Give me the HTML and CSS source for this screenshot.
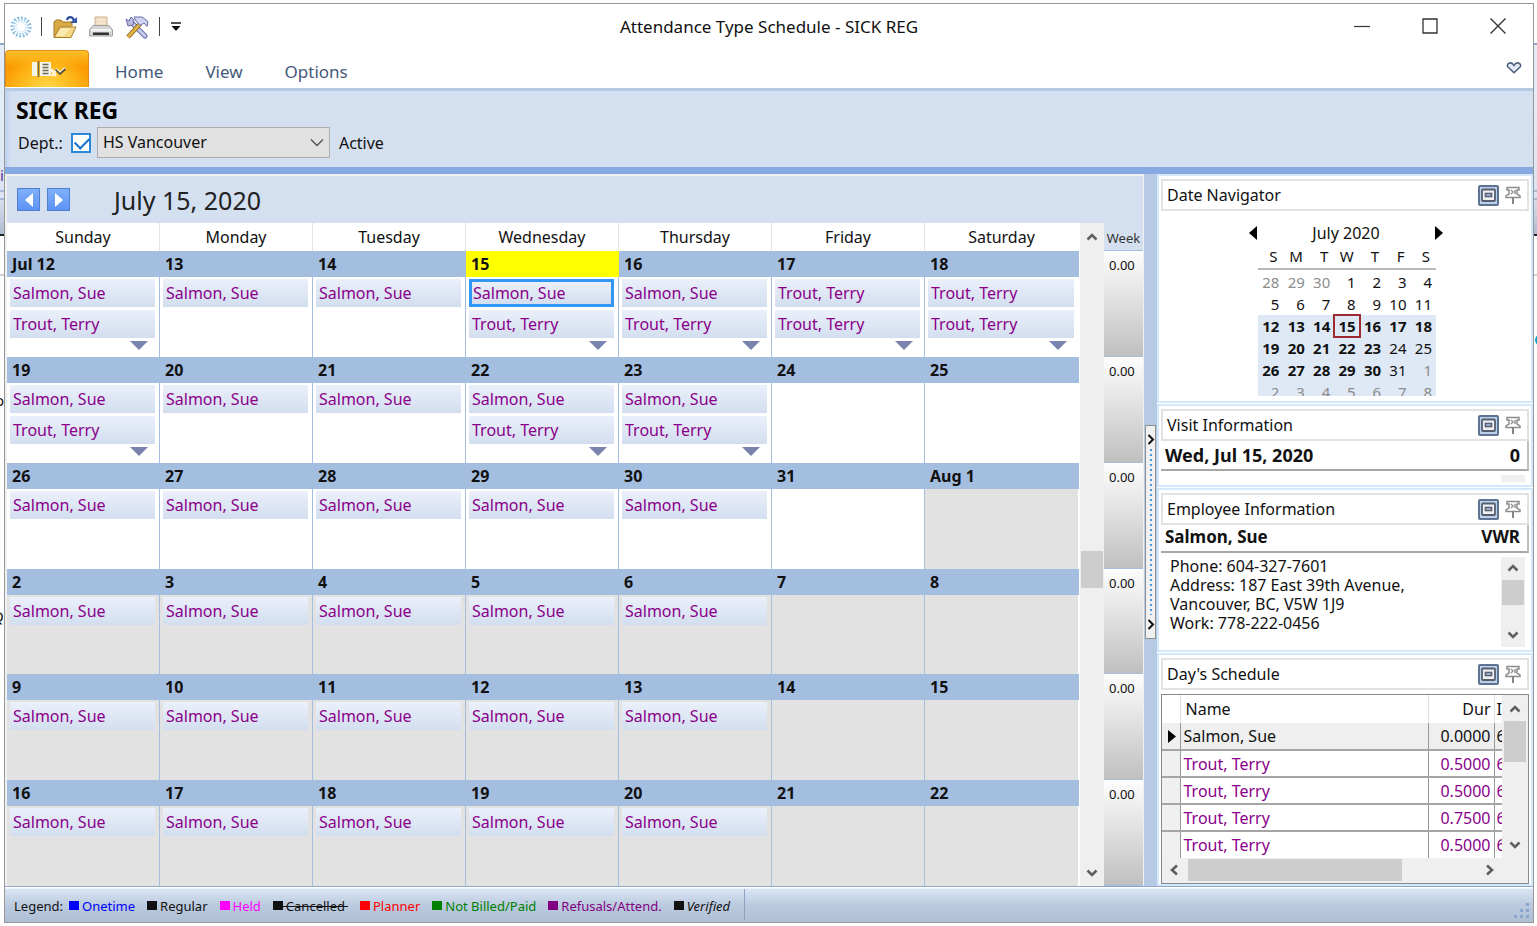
FILE: index.html
```html
<!DOCTYPE html>
<html lang="en">
<head>
<meta charset="utf-8">
<title>Attendance Type Schedule - SICK REG</title>
<link rel="stylesheet" href="styles.css">
</head>
<body>
<svg class="defs" aria-hidden="true">
  <symbol id="max" viewBox="0 0 21 21">
    <rect x="1" y="1" width="19" height="19" rx="1" fill="#bdd0ea" stroke="#5d7391" stroke-width="2"/>
    <rect x="4" y="4.500" width="13" height="11.500" rx="1" fill="#f0f0f2" stroke="#555f70" stroke-width="1.800"/>
    <rect x="7.500" y="8.500" width="6" height="3" fill="#b9cdec" stroke="#555f70" stroke-width="1.600"/>
  </symbol>
  <symbol id="pin" viewBox="0 0 16 18">
    <path d="M2 1.500h12v2.500h-2v4l3 2v1.500H1V10l3-2V4H2z" fill="#fff" stroke="#8c8c8c" stroke-width="1.500"/>
    <path d="M6 4l2 2-2 2M10 4v4" stroke="#8c8c8c" fill="none" stroke-width="1.400"/>
    <path d="M8 11v7" stroke="#858585" stroke-width="2"/>
  </symbol>
  <symbol id="up" viewBox="0 0 12 10"><path d="M1.500 7.500L6 3l4.500 4.500" fill="none" stroke="#606060" stroke-width="2.600"/></symbol>
  <symbol id="down" viewBox="0 0 12 10"><path d="M1.500 2.500L6 7l4.500-4.500" fill="none" stroke="#606060" stroke-width="2.600"/></symbol>
</svg>
<div class="behind" aria-hidden="true">
  <span class="scrap scrap-i">i</span><span class="scrap scrap-o">o</span><span class="scrap scrap-q">Q</span><span class="dot"></span>
</div>
<main class="window">
  <header class="titlebar">
    <div class="quick">
      <svg class="app-icon" width="22" height="22" viewBox="0 0 22 22"><g fill="none" stroke="#6fb0da"><circle cx="11" cy="11" r="9.500" stroke-width="2" stroke-dasharray="1.800 1.900"/><circle cx="11" cy="11" r="7.200" stroke="#93c8e8" stroke-width="2" stroke-dasharray="1.400 1.420"/><circle cx="11" cy="11" r="5" stroke="#c6e2f3" stroke-width="1.500" stroke-dasharray="1 .960"/></g></svg>
      <span class="bar"></span>
      <button class="tool" aria-label="Open"><svg width="26" height="24" viewBox="0 0 26 24"><path d="M2 22V7l2-2h5l2 2h9v4" fill="#dba944" stroke="#a07a28"/><path d="M2 22.500L8 12h16l-5 10.500z" fill="#f6d783" stroke="#a5802e"/><path d="M4 21l5-8h10l-7 8z" fill="#fbe9ae"/><path d="M15 5c1-4 6-4 7 1" fill="none" stroke="#2c4c9c" stroke-width="2.200"/><path d="M18 8h7V2z" fill="#3658a8"/></svg></button>
      <button class="tool" aria-label="Print"><svg width="26" height="22" viewBox="0 0 26 22"><path d="M7 1h12v10H7z" fill="#f4dcc0" stroke="#cdb497"/><path d="M9 4h8M9 7h8" stroke="#fff0dd"/><path d="M5 9.500h16l3.500 4.500v6h-23v-6z" fill="#d6d6d6" stroke="#a0a0a0"/><path d="M3 13h20v2.500H3z" fill="#f4f4f4"/><path d="M5 16.500h16V19H5z" fill="#333"/></svg></button>
      <button class="tool" aria-label="Tools"><svg width="26" height="24" viewBox="0 0 26 24"><path d="M7 7l14 14" stroke="#6a6aa8" stroke-width="5" stroke-linecap="round"/><path d="M7 7l14 14" stroke="#c9cbee" stroke-width="3" stroke-linecap="round"/><path d="M2 4l3 2 2-4 3 3-1 5-5 1z" fill="#b9bbe2" stroke="#6a6aa8"/><path d="M4 22L16 9" stroke="#8e6a1c" stroke-width="4.600"/><path d="M4 22L16 9" stroke="#e2b544" stroke-width="2.600"/><path d="M10 2h8l6 4.500-1 5-3-3.500-4 2.500L12 6z" fill="#d0d2f2" stroke="#6a6aa8"/></svg></button>
      <span class="bar"></span>
      <button class="more" aria-label="Customize toolbar"><svg width="12" height="10" viewBox="0 0 12 10"><path d="M1 1h10" stroke="#222" stroke-width="1.600"/><path d="M1.500 4h9L6 9z" fill="#111"/></svg></button>
    </div>
    <h1 class="title">Attendance Type Schedule - SICK REG</h1>
    <div class="caption">
      <button aria-label="Minimize"><svg width="18" height="18" viewBox="0 0 18 18"><path d="M1 9.500h16" stroke="#333" stroke-width="1.200"/></svg></button>
      <button aria-label="Maximize"><svg width="18" height="18" viewBox="0 0 18 18"><path d="M2 2h14v14H2z" fill="none" stroke="#333" stroke-width="1.300"/></svg></button>
      <button aria-label="Close"><svg width="18" height="18" viewBox="0 0 18 18"><path d="M1.500 1.500l15 15m0-15l-15 15" stroke="#333" stroke-width="1.400"/></svg></button>
    </div>
  </header>
  <nav class="ribbon">
    <button class="file" aria-label="Application menu"><svg width="38" height="18" viewBox="0 0 38 18"><path d="M2 2h5v14H2z" fill="#f4f4ea"/><path d="M8.500 1v16" stroke="#6d6a55" stroke-width="1.500"/><path d="M10 2h11v14H10z" fill="#f4f4ea"/><path d="M12.500 4.500h6m-6 3h6m-6 3h6m-6 3h6" stroke="#6d6a55" stroke-width="1.500"/><path d="M21 9l5 7m0-6l-4 6M26 9l4 4 5-5" fill="none" stroke="#fff5d8" stroke-width="2.400"/><path d="M25.500 9.500L30 14l5.500-5" fill="none" stroke="#57513a" stroke-width="1.700"/></svg></button>
    <a class="tab" href="#home">Home</a><a class="tab" href="#view">View</a><a class="tab" href="#options">Options</a>
    <button class="collapse" aria-label="Collapse ribbon"><svg width="16" height="12" viewBox="0 0 16 12"><path d="M8 3.500C6.500.8 4.500.6 3 1.200 1 2 1 4.200 2.200 5.300L8 10.800l5.800-5.500C15 4.200 15 2 13 1.200c-1.500-.6-3.500-.4-5 2.300z" fill="#e3eaf5" stroke="#4c5e79" stroke-width="1.500"/></svg></button>
  </nav>
  <section class="filter">
    <h2>SICK REG</h2>
    <div class="filter-row">
      <label for="dept-on">Dept.:</label>
      <input class="check" type="checkbox" id="dept-on" checked>
      <div class="combo">
        <select aria-label="Department"><option>HS Vancouver</option></select>
        <svg width="14" height="9" viewBox="0 0 14 9"><path d="M1 1.500l6 6 6-6" fill="none" stroke="#555" stroke-width="1.500"/></svg>
      </div>
      <span>Active</span>
    </div>
  </section>
  <div class="work">
    <section class="calendar">
      <div class="cal-bar">
        <button class="step" aria-label="Previous"><svg width="12" height="16" viewBox="0 0 12 16"><path d="M10 1v14L2 8z" fill="#fff"/></svg></button>
        <button class="step" aria-label="Next"><svg width="12" height="16" viewBox="0 0 12 16"><path d="M2 1v14l8-7z" fill="#fff"/></svg></button>
        <h2>July 15, 2020</h2>
      </div>
      <div class="cal-body">
        <table class="month">
          <thead><tr><th>Sunday</th><th>Monday</th><th>Tuesday</th><th>Wednesday</th><th>Thursday</th><th>Friday</th><th>Saturday</th></tr></thead>
          <tbody>
            <tr>
              <td class="over"><time>Jul 12</time><button>Salmon, Sue</button><button>Trout, Terry</button></td>
              <td><time>13</time><button>Salmon, Sue</button></td>
              <td><time>14</time><button>Salmon, Sue</button></td>
              <td class="over today"><time>15</time><button class="selected">Salmon, Sue</button><button>Trout, Terry</button></td>
              <td class="over"><time>16</time><button>Salmon, Sue</button><button>Trout, Terry</button></td>
              <td class="over"><time>17</time><button>Trout, Terry</button><button>Trout, Terry</button></td>
              <td class="over"><time>18</time><button>Trout, Terry</button><button>Trout, Terry</button></td>
            </tr>
            <tr>
              <td class="over"><time>19</time><button>Salmon, Sue</button><button>Trout, Terry</button></td>
              <td><time>20</time><button>Salmon, Sue</button></td>
              <td><time>21</time><button>Salmon, Sue</button></td>
              <td class="over"><time>22</time><button>Salmon, Sue</button><button>Trout, Terry</button></td>
              <td class="over"><time>23</time><button>Salmon, Sue</button><button>Trout, Terry</button></td>
              <td><time>24</time></td>
              <td><time>25</time></td>
            </tr>
            <tr>
              <td><time>26</time><button>Salmon, Sue</button></td>
              <td><time>27</time><button>Salmon, Sue</button></td>
              <td><time>28</time><button>Salmon, Sue</button></td>
              <td><time>29</time><button>Salmon, Sue</button></td>
              <td><time>30</time><button>Salmon, Sue</button></td>
              <td><time>31</time></td>
              <td class="next"><time>Aug 1</time></td>
            </tr>
            <tr class="next">
              <td><time>2</time><button>Salmon, Sue</button></td>
              <td><time>3</time><button>Salmon, Sue</button></td>
              <td><time>4</time><button>Salmon, Sue</button></td>
              <td><time>5</time><button>Salmon, Sue</button></td>
              <td><time>6</time><button>Salmon, Sue</button></td>
              <td><time>7</time></td>
              <td><time>8</time></td>
            </tr>
            <tr class="next">
              <td><time>9</time><button>Salmon, Sue</button></td>
              <td><time>10</time><button>Salmon, Sue</button></td>
              <td><time>11</time><button>Salmon, Sue</button></td>
              <td><time>12</time><button>Salmon, Sue</button></td>
              <td><time>13</time><button>Salmon, Sue</button></td>
              <td><time>14</time></td>
              <td><time>15</time></td>
            </tr>
            <tr class="next">
              <td><time>16</time><button>Salmon, Sue</button></td>
              <td><time>17</time><button>Salmon, Sue</button></td>
              <td><time>18</time><button>Salmon, Sue</button></td>
              <td><time>19</time><button>Salmon, Sue</button></td>
              <td><time>20</time><button>Salmon, Sue</button></td>
              <td><time>21</time></td>
              <td><time>22</time></td>
            </tr>
          </tbody>
        </table>
        <div class="scroll cal-scroll">
          <svg width="12" height="10"><use href="#up"/></svg><div class="track"><i></i></div><svg width="12" height="10"><use href="#down"/></svg>
        </div>
        <div class="week">
          <h3>Week</h3>
          <ul><li>0.00</li><li>0.00</li><li>0.00</li><li>0.00</li><li>0.00</li><li>0.00</li></ul>
        </div>
      </div>
    </section>
    <div class="splitter">
      <button aria-label="Collapse side panel"><svg width="8" height="11" viewBox="0 0 8 11"><path d="M1.500 1l4.500 4.500L1.500 10" fill="none" stroke="#111" stroke-width="2"/></svg><span></span><svg width="8" height="11" viewBox="0 0 8 11"><path d="M1.500 1l4.500 4.500L1.500 10" fill="none" stroke="#111" stroke-width="2"/></svg></button>
    </div>
    <aside class="side">
      <section class="panel navigator">
        <header><h3>Date Navigator</h3><button aria-label="Maximize panel"><svg width="21" height="21"><use href="#max"/></svg></button><button aria-label="Pin panel"><svg width="16" height="18"><use href="#pin"/></svg></button></header>
        <div class="mini">
          <div class="mini-head">
            <button aria-label="Previous month"><svg width="8" height="14" viewBox="0 0 8 14"><path d="M8 0v14L0 7z"/></svg></button>
            <span>July 2020</span>
            <button aria-label="Next month"><svg width="8" height="14" viewBox="0 0 8 14"><path d="M0 0v14l8-7z"/></svg></button>
          </div>
          <table class="mini-days">
            <thead><tr><th>S</th><th>M</th><th>T</th><th>W</th><th>T</th><th>F</th><th>S</th></tr></thead>
            <tbody>
              <tr><td class="dim">28</td><td class="dim">29</td><td class="dim">30</td><td>1</td><td>2</td><td>3</td><td>4</td></tr>
              <tr><td>5</td><td>6</td><td>7</td><td>8</td><td>9</td><td>10</td><td>11</td></tr>
              <tr class="range"><td class="busy">12</td><td class="busy">13</td><td class="busy">14</td><td class="busy now">15</td><td class="busy">16</td><td class="busy">17</td><td class="busy">18</td></tr>
              <tr class="range"><td class="busy">19</td><td class="busy">20</td><td class="busy">21</td><td class="busy">22</td><td class="busy">23</td><td>24</td><td>25</td></tr>
              <tr class="range"><td class="busy">26</td><td class="busy">27</td><td class="busy">28</td><td class="busy">29</td><td class="busy">30</td><td>31</td><td class="dim">1</td></tr>
              <tr class="range"><td class="dim">2</td><td class="dim">3</td><td class="dim">4</td><td class="dim">5</td><td class="dim">6</td><td class="dim">7</td><td class="dim">8</td></tr>
            </tbody>
          </table>
        </div>
      </section>
      <section class="panel visit">
        <header><h3>Visit Information</h3><button aria-label="Maximize panel"><svg width="21" height="21"><use href="#max"/></svg></button><button aria-label="Pin panel"><svg width="16" height="18"><use href="#pin"/></svg></button></header>
        <div class="headline"><span>Wed, Jul 15, 2020</span><span>0</span></div>
        <div class="stub"></div>
      </section>
      <section class="panel employee">
        <header><h3>Employee Information</h3><button aria-label="Maximize panel"><svg width="21" height="21"><use href="#max"/></svg></button><button aria-label="Pin panel"><svg width="16" height="18"><use href="#pin"/></svg></button></header>
        <div class="headline"><span>Salmon, Sue</span><span>VWR</span></div>
        <div class="contact">
          <p>Phone: 604-327-7601<br>Address: 187 East 39th Avenue,<br>Vancouver, BC, V5W 1J9<br>Work: 778-222-0456</p>
          <div class="scroll"><svg width="12" height="10"><use href="#up"/></svg><div class="track"><i></i></div><svg width="12" height="10"><use href="#down"/></svg></div>
        </div>
      </section>
      <section class="panel day">
        <header><h3>Day's Schedule</h3><button aria-label="Maximize panel"><svg width="21" height="21"><use href="#max"/></svg></button><button aria-label="Pin panel"><svg width="16" height="18"><use href="#pin"/></svg></button></header>
        <div class="grid-box">
          <div class="grid-view">
            <table class="sched">
              <colgroup><col class="c-mark"><col><col class="c-dur"><col class="c-cut"></colgroup>
              <thead><tr><th></th><th>Name</th><th class="num">Dur</th><th>I</th></tr></thead>
              <tbody>
                <tr class="current"><td><svg width="8" height="13" viewBox="0 0 8 13"><path d="M0 0v13l8-6.500z"/></svg></td><td>Salmon, Sue</td><td class="num">0.0000</td><td>6</td></tr>
                <tr><td></td><td>Trout, Terry</td><td class="num">0.5000</td><td>6</td></tr>
                <tr><td></td><td>Trout, Terry</td><td class="num">0.5000</td><td>6</td></tr>
                <tr><td></td><td>Trout, Terry</td><td class="num">0.7500</td><td>6</td></tr>
                <tr><td></td><td>Trout, Terry</td><td class="num">0.5000</td><td>6</td></tr>
              </tbody>
            </table>
            <div class="scroll"><svg width="12" height="10"><use href="#up"/></svg><div class="track"><i></i></div><svg width="12" height="10"><use href="#down"/></svg></div>
          </div>
          <div class="hscroll"><svg width="10" height="12" viewBox="0 0 10 12"><path d="M8 1.500L3 6l5 4.500" fill="none" stroke="#606060" stroke-width="2.600"/></svg><div class="htrack"><i></i></div><svg width="10" height="12" viewBox="0 0 10 12"><path d="M2 1.500L7 6l-5 4.500" fill="none" stroke="#606060" stroke-width="2.600"/></svg></div>
        </div>
      </section>
    </aside>
  </div>
  <footer class="status">
    <div class="legend">
      <span class="legend-title">Legend:</span>
      <span class="key onetime">Onetime</span><span class="key">Regular</span><span class="key held">Held</span><span class="key cancelled">Cancelled</span><span class="key planner">Planner</span><span class="key billed">Not Billed/Paid</span><span class="key refusal">Refusals/Attend.</span><span class="key verified">Verified</span>
    </div>
    <svg class="grip" width="16" height="16" viewBox="0 0 16 16"><path d="M12 0h3v3h-3zM6 6h3v3H6zM12 6h3v3h-3zM0 12h3v3H0zM6 12h3v3H6zM12 12h3v3h-3z" fill="#8ba6cc"/></svg>
  </footer>
</main>
</body>
</html>
```
FILE: styles.css
```css
* { box-sizing: border-box; }
body {
  margin: 0; min-height: 100vh; padding: 3px 3px 3px 4px;
  display: flex; flex-direction: column; position: relative; overflow-x: hidden;
  font: 16px/20px "Noto Sans", "Open Sans", sans-serif; color: #111;
  background: linear-gradient(#fff 0 43px, #8ea6c8 43px 45px, #e3ecf8 45px 110px, #dbe5f3 190px, #a6bad8 190px 192px, #dce6f4 192px 198px, #a6bad8 198px 200px, #d6dfee 200px, #aebcd2 234px, #222 234px 236px, #fff 236px 274px, #d0d0d0 274px 276px, #fff 276px);
}
h1, h2, h3, p, ul { margin: 0; padding: 0; }
h1, h3 { font-size: 16px; font-weight: 400; }
ul { list-style: none; }
button { font: inherit; color: inherit; border: 0; padding: 0; background: none; display: flex; align-items: center; justify-content: center; }
a { color: inherit; text-decoration: none; }
table { border-collapse: collapse; border-spacing: 0; }
th, td { padding: 0; font-weight: 400; }
svg { flex: none; display: block; }
.defs { position: absolute; width: 0; height: 0; }

.behind { position: absolute; inset: 0; overflow: hidden; }
.scrap { position: absolute; font-size: 15px; }
.scrap-i { left: 0; top: 165px; color: #5a2a90; }
.scrap-o { left: -5px; top: 390px; }
.scrap-q { left: -8px; top: 606px; }
.dot { position: absolute; right: -10px; top: 334px; width: 12px; height: 12px; border-radius: 6px; background: #00a8c8; }

.window { position: relative; flex: 1; display: flex; flex-direction: column; border: 1px solid #979797; background: #fff; }

.titlebar { height: 45px; display: grid; grid-template-columns: 1fr auto 1fr; align-items: center; }
.title { font-size: 17px; }
.quick { display: flex; align-items: center; gap: 10px; padding-left: 5px; }
.bar { width: 1px; height: 19px; margin-left: -1px; background: #444; }
.tool { width: 26px; }
.quick .more { width: 12px; }
.caption { display: flex; justify-content: flex-end; gap: 50px; padding: 0 26px 2px 0; }

.ribbon { height: 39px; display: flex; align-items: stretch; color: #44597a; font-size: 17px; }
.file { width: 84px; margin: 1px 0; padding-left: 4px; border-radius: 4px 4px 0 0; border: 1px solid #e08a1c; border-bottom: 0; background: radial-gradient(ellipse at 50% 110%, #ffd84a 0, #fdb81a 45%, rgba(253,160,5,0) 75%), linear-gradient(#fbc02a, #fb9a00 45%, #fba40c); }
.tab { padding: 13px 21px 0; }
.tab:first-of-type { margin-left: 5px; }
.collapse { margin: 0 11px 2px auto; }

.filter { height: 86px; border-top: 3px solid #b7cae3; border-bottom: 7px solid #86a9e1; background: linear-gradient(90deg, #bcd1f0, #d4e0f0 6px); padding: 4px 11px 0; }
.filter h2 { font-size: 23px; line-height: 30px; margin-bottom: 2px; color: #000; }
.filter-row { display: flex; align-items: center; padding-left: 2px; }
.check { appearance: none; position: relative; width: 20px; height: 20px; margin: 0 6px 0 8px; border: 2px solid #2b87d8; background: #fff; }
.check:checked::after { content: ""; position: absolute; left: 2px; top: 2px; width: 12px; height: 7px; border-left: 2px solid #1473c8; border-bottom: 2px solid #1473c8; transform: rotate(-45deg); }
.combo { position: relative; width: 233px; height: 31px; margin-right: 9px; }
.combo select { appearance: none; width: 100%; height: 100%; padding: 0 5px 1px; font: inherit; color: inherit; border: 1px solid #adadad; border-radius: 0; background: #e1e1e1; }
.combo svg { position: absolute; right: 6px; top: 11px; }

.work { flex: 1; display: grid; grid-template-columns: minmax(0, 1fr) 13px 376px; background: #b7cae3; }
.calendar { display: flex; flex-direction: column; border-left: 2px solid #f0f0f0; border-top: 2px solid #f0f0f0; border-right: 1px solid #f0f0f0; background: #d4e0f0; }
.cal-bar { height: 47px; display: flex; align-items: center; gap: 7px; padding-left: 10px; }
.cal-bar h2 { font-size: 25px; font-weight: 400; margin-left: 37px; color: #222; }
.step { width: 23px; height: 23px; border: 1px solid #4f7fd0; background: linear-gradient(#7fb0f8, #5c93f5); }
.cal-body { flex: 1; display: grid; grid-template-columns: minmax(0, 1fr) 24px 39px; }
.month { display: flex; flex-direction: column; border-right: 2px solid #fff; background: #fff; }
.month tr { display: grid; grid-template-columns: repeat(7, minmax(0, 1fr)); }
.month tbody { flex: 1; display: grid; grid-template-rows: repeat(6, minmax(0, 1fr)); }
.month th { height: 28px; padding-top: 4px; border-right: 1px solid #e4e4e4; }
.month th:last-child { border-right: 0; }
.month td { position: relative; min-width: 0; display: flex; flex-direction: column; border-right: 1px solid #a5bddf; }
.month td:last-child { border-right: 0; }
.month time { display: block; height: 26px; flex: none; margin-right: -1px; padding: 3px 5px 0; font-size: 16px; font-weight: 700; background: #a4bee0; }
.month tr.next, .month td.next { background: #e2e2e2; }
.month td button { height: 28px; flex: none; margin: 2px 4px 1px 3px; padding: 0 3px; justify-content: flex-start; color: #8a008a; background: linear-gradient(#ebf0fa, #d2deef); }
.month td button.selected { border: 3px solid #3197f5; padding: 0 1px; }
.month .today time { background: #ff0; }
.over::after { content: ""; position: absolute; right: 11px; bottom: 7px; border: 9px solid transparent; border-top-color: #7a83ad; border-bottom: 0; }

.scroll { display: flex; flex-direction: column; align-items: center; background: #efefef; }
.track { flex: 1; align-self: stretch; display: flex; flex-direction: column; }
.track i { background: #cdcdcd; }
.cal-scroll { padding: 9px 0 8px; }
.cal-scroll .track { padding: 309px 1px 0; }
.cal-scroll i { height: 37px; }
.week { display: flex; flex-direction: column; font-size: 13px; }
.week h3 { height: 28px; padding-top: 5px; font-size: 13px; text-align: center; color: #333; border-bottom: 1px solid #a4bee0; }
.week ul { flex: 1; display: grid; grid-template-rows: repeat(6, minmax(0, 1fr)); }
.week li { padding: 4px 5px; border-bottom: 1px solid #a4bee0; background: linear-gradient(#fdfdfd, #c0c0c0); }

.splitter { display: flex; justify-content: center; align-items: center; padding-top: 4px; }
.splitter button { width: 11px; height: 214px; flex-direction: column; padding: 8px 0; border: 1px solid #8f8f8f; background: #f0f0f0; }
.splitter span { flex: 1; width: 2px; margin: 4px 0; background: repeating-linear-gradient(#3e9be8 0 2px, transparent 2px 5px); }

.side { display: flex; flex-direction: column; gap: 1px; background: #fff; }
.panel { display: flex; flex-direction: column; padding: 3px 2px; border: 2px solid #d3e8fb; }
.panel > header { height: 32px; flex: none; display: flex; align-items: center; gap: 6px; padding: 0 6px 0 4px; border: 2px solid #e2e2e2; }
.panel h3 { margin-right: auto; }
.navigator { height: 229px; }
.mini { flex: 1; width: 196px; margin: 12px auto 2px; padding-left: 2px; overflow: hidden; }
.mini-head { display: flex; justify-content: space-between; height: 20px; }
.mini-days { width: 178px; margin-left: 9px; table-layout: fixed; }
.mini-days th, .mini-days td { height: 22px; line-height: 20px; padding-right: 4px; text-align: right; font-size: 15px; }
.mini-days th { height: 26px; padding-right: 6px; border-bottom: 2px solid #b8b8b8; }
.mini-days tbody tr:first-child td { height: 24px; }
.mini-days .dim { color: #8c8c8c; }
.mini-days .busy { font-weight: 700; }
.mini-days .range { background: #dfe9f6; }
.mini-days .now { outline: 2px solid #9c2a30; outline-offset: -1px; }
.visit { height: 83px; }
.headline { display: flex; justify-content: space-between; padding: 2px 7px 4px 4px; font-size: 17px; font-weight: 700; border-right: 2px solid #c0c0c0; border-bottom: 2px solid #a8a8a8; }
.visit .headline { padding-top: 4px; font-size: 18px; }
.stub { width: 24px; height: 8px; margin: 4px 4px 0 auto; background: #efefef; }
.employee { height: 164px; }
.contact { flex: 1; display: flex; justify-content: space-between; padding: 4px 4px 0 9px; }
.contact p { line-height: 19px; }
.contact .scroll { width: 24px; padding: 6px 0 7px; }
.contact .track { padding: 7px 1px; }
.contact i { height: 25px; }
.day { flex: 1; padding-bottom: 0; }
.grid-box { flex: 1; margin-top: 4px; display: flex; flex-direction: column; border: 1px solid #858a92; background: #efefef; }
.grid-view { display: flex; }
.sched { flex: 1; width: 0; table-layout: fixed; background: #fff; }
.sched .c-mark { width: 18px; }
.sched .c-dur { width: 66px; }
.sched .c-cut { width: 8px; }
.sched th, .sched td { height: 27px; padding: 0 3px; text-align: left; overflow: hidden; white-space: nowrap; }
.sched th { height: 28px; padding: 0 5px; border-right: 1px solid #e0e0e0; }
.sched td { color: #8a008a; border-right: 1px solid #999; border-bottom: 2px solid #a5a5a5; }
.sched tr:last-child td { border-bottom: 0; }
.sched td:first-child { background: #f0f0f0; padding: 0 6px; }
.sched .current td { background: #efefef; color: #111; }
.sched td:last-child, .sched th:last-child { padding: 0 0 0 2px; border-right: 0; }
.sched .num { text-align: right; }
.sched td.num, .sched th.num { padding: 0 3px; }
.grid-view .scroll { width: 26px; padding: 9px 2px 8px; }
.grid-view .track { padding: 7px 0; }
.grid-view i { height: 41px; }
.hscroll { height: 24px; display: flex; align-items: center; padding: 0 33px 0 7px; }
.htrack { flex: 1; height: 22px; margin-left: 9px; }
.htrack i { display: block; width: 72%; height: 100%; background: #cdcdcd; }

.status { height: 36px; flex: none; display: flex; align-items: stretch; justify-content: space-between; border-top: 1px solid #8ea6c8; background: linear-gradient(#fff 0 1px, #d9e5f4 2px, #bccbdf 50%, #aebfd5); font-size: 13px; }
.legend { display: flex; align-items: center; gap: 12px; margin: 2px 0; padding: 3px 14px 0 9px; border-right: 1px solid #8fa3be; }
.legend-title { margin-right: -6px; }
.key { position: relative; display: flex; align-items: center; gap: 3px; }
.key::before { content: ""; width: 10px; height: 9px; margin-bottom: 1px; background: currentColor; }
.onetime { color: #00f; }
.held { color: #f0f; }
.cancelled { margin-right: 3px; }
.cancelled::after { content: ""; position: absolute; left: 0; right: -3px; top: 10px; height: 1px; background: currentColor; }
.planner { color: #f00; }
.billed { color: #008000; }
.refusal { color: #800080; }
.verified { font-style: italic; }
.grip { align-self: flex-end; margin: 0 3px 3px; }
```
